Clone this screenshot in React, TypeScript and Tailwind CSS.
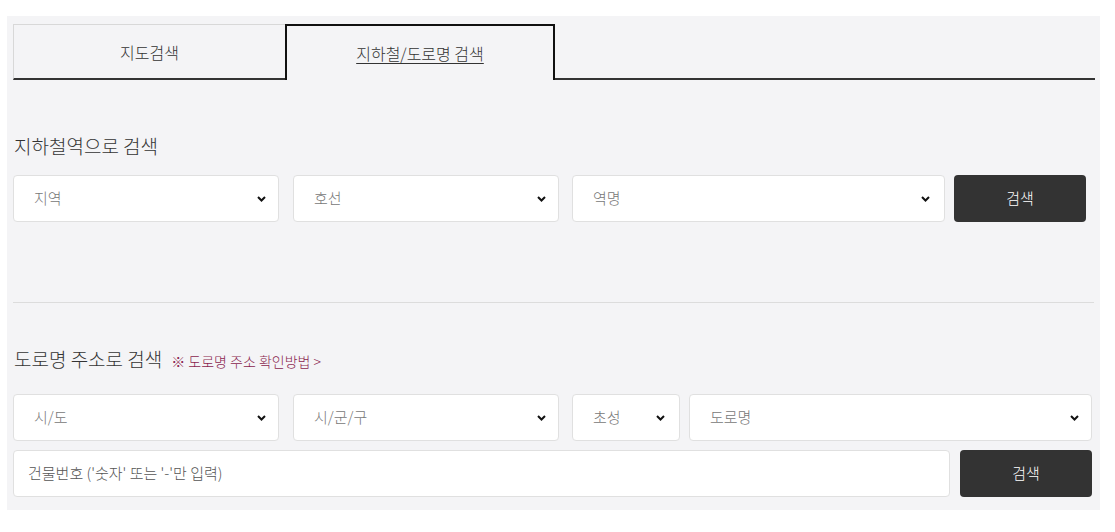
// Store-finder search panel: tab bar + subway / road-name search forms

const FONT = { fontFamily: '"Noto Sans CJK KR", "Noto Sans", sans-serif' };

function Chevron() {
  return (
    <svg width="9" height="6" viewBox="0 0 9 6" className="shrink-0">
      <path d="M1 1 L4.5 4.5 L8 1" fill="none" stroke="#111" strokeWidth="2" strokeLinejoin="miter" />
    </svg>
  );
}

function Select({ label, width, pr = 'pr-[12px]' }: { label: string; width: string; pr?: string }) {
  return (
    <div
      className={`${width} h-[47px] shrink-0 flex items-center justify-between pl-[20px] ${pr} bg-white border border-[#e0e0e0] rounded-[4px] text-[15px] font-light text-[#777]`}
    >
      <span>{label}</span>
      <Chevron />
    </div>
  );
}

function SearchButton({ width = 'w-[132px]' }: { width?: string }) {
  return (
    <button className={`${width} h-[47px] shrink-0 bg-[#333] rounded-[4px] text-white text-[15px] font-light`}>
      검색
    </button>
  );
}

export default function App() {
  return (
    <div className="bg-white min-h-[532px] pt-[16px] pl-[7px]" style={FONT}>
      <div className="w-[1093px] h-[494px] bg-[#f4f4f6] pt-[8px] px-[6px]">
        {/* Tabs */}
        <div className="flex h-[56px] w-[1082px]">
          <div className="w-[272px] flex items-center justify-center border-t border-l border-[#d8d8d8] border-b-2 border-b-[#333] text-[16px] font-light text-[#333]">
            지도검색
          </div>
          <div className="w-[270px] flex items-center justify-center border-t-2 border-x-2 border-[#111] text-[16px] font-light text-[#333]">
            <span className="underline underline-offset-[3px]">지하철/도로명 검색</span>
          </div>
          <div className="flex-1 border-b-2 border-[#333]" />
        </div>

        {/* Subway search */}
        <h2 className="mt-[53px] text-[19px] leading-[26px] font-light text-[#333] pl-[1px]">지하철역으로 검색</h2>
        <div className="mt-[16px] flex items-center">
          <Select label="지역" width="w-[266px]" />
          <div className="w-[14px]" />
          <Select label="호선" width="w-[266px]" />
          <div className="w-[13px]" />
          <Select label="역명" width="w-[373px]" pr="pr-[14px]" />
          <div className="w-[9px]" />
          <SearchButton />
        </div>

        <div className="mt-[80px] h-px bg-[#dcdcdc] w-[1081px]" />

        {/* Road-name search */}
        <div className="mt-[43px] flex items-baseline gap-[9px] pl-[1px]">
          <h2 className="text-[19px] leading-[26px] font-light text-[#333]">도로명 주소로 검색</h2>
          <a className="text-[14px] font-light text-[#8a1e4e]">※ 도로명 주소 확인방법 &gt;</a>
        </div>
        <div className="mt-[22px] flex items-center">
          <Select label="시/도" width="w-[266px]" />
          <div className="w-[14px]" />
          <Select label="시/군/구" width="w-[266px]" />
          <div className="w-[13px]" />
          <Select label="초성" width="w-[108px]" pr="pr-[14px]" />
          <div className="w-[9px]" />
          <Select label="도로명" width="w-[403px]" />
        </div>
        <div className="mt-[9px] flex items-center">
          <div className="w-[937px] h-[47px] shrink-0 flex items-center pl-[14px] bg-white border border-[#e0e0e0] rounded-[4px] text-[15px] font-light text-[#555]">
            건물번호 (&apos;숫자&apos; 또는 &apos;-&apos;만 입력)
          </div>
          <div className="w-[10px]" />
          <SearchButton />
        </div>
      </div>
    </div>
  );
}
